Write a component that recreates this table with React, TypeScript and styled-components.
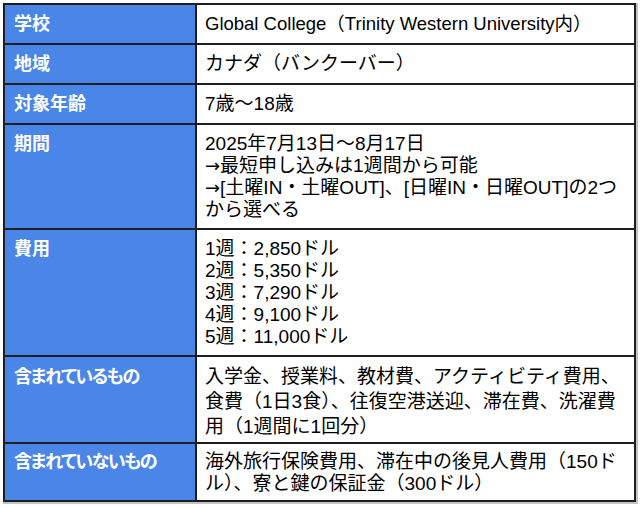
import React from 'react';
import styled, { createGlobalStyle } from 'styled-components';

const GlobalStyle = createGlobalStyle`
  html, body {
    margin: 0;
    padding: 0;
    background: #ffffff;
  }
  body {
    font-family: 'Liberation Sans', 'Noto Sans CJK JP', sans-serif;
  }
`;

const Page = styled.div`
  padding: 3px 0 0 3px;
  width: 640px;
  height: 508px;
  box-sizing: border-box;
`;

const Table = styled.table`
  border-collapse: collapse;
  width: 633px;
  table-layout: fixed;
  box-shadow: 1px 1px 0 1px #c4c4c4;
`;

const HeadCell = styled.th<{ $tight?: boolean; $pt: number }>`
  width: 172px;
  background: #4a86e8;
  color: #ffffff;
  font-weight: 700;
  font-size: 18px;
  line-height: 22px;
  text-align: left;
  vertical-align: top;
  padding: ${(p) => p.$pt}px 9px 0;
  border: 2px solid #1e1e1e;
  font-feature-settings: 'palt';
  letter-spacing: ${(p) => (p.$tight ? '-1.5px' : '0')};
  white-space: nowrap;
`;

const BodyCell = styled.td<{ $pt: number; $pb: number }>`
  background: #ffffff;
  color: #000000;
  font-size: 19px;
  vertical-align: top;
  padding: ${(p) => p.$pt}px 8px ${(p) => p.$pb}px;
  border: 2px solid #1e1e1e;
  white-space: nowrap;
`;

const Line = styled.div<{ $h: number; $size?: number }>`
  height: ${(p) => p.$h}px;
  line-height: ${(p) => p.$h}px;
  font-size: ${(p) => (p.$size ? `${p.$size}px` : 'inherit')};
`;

// wider arrow than the Liberation one, with metrics that fit the line
const Arrow = styled.span`
  font-family: 'DejaVu Sans', sans-serif;
  font-size: 18px;
`;

type Row = {
  head: string;
  lines: React.ReactNode[];
  lh: number;
  pt: number;
  pb: number;
  tight?: boolean;
  size?: number;
};

const rows: Row[] = [
  {
    head: '学校',
    lh: 22,
    pt: 8,
    pb: 8,
    size: 18.5,
    lines: ['Global College（Trinity Western University内）'],
  },
  { head: '地域', lh: 22, pt: 8, pb: 8, lines: ['カナダ（バンクーバー）'] },
  { head: '対象年齢', lh: 22, pt: 8, pb: 8, lines: ['7歳〜18歳'] },
  {
    head: '期間',
    lh: 22,
    pt: 8,
    pb: 7,
    lines: [
      '2025年7月13日～8月17日',
      <>
        <Arrow>→</Arrow>最短申し込みは1週間から可能
      </>,
      <>
        <Arrow>→</Arrow>[土曜IN・土曜OUT]、[日曜IN・日曜OUT]の2つ
      </>,
      'から選べる',
    ],
  },
  {
    head: '費用',
    lh: 22,
    pt: 8,
    pb: 7,
    lines: [
      '1週：2,850ドル',
      '2週：5,350ドル',
      '3週：7,290ドル',
      '4週：9,100ドル',
      '5週：11,000ドル',
    ],
  },
  {
    head: '含まれているもの',
    tight: true,
    lh: 25,
    pt: 7,
    pb: 3,
    lines: [
      '入学金、授業料、教材費、アクティビティ費用、',
      '食費（1日3食）、往復空港送迎、滞在費、洗濯費',
      '用（1週間に1回分）',
    ],
  },
  {
    head: '含まれていないもの',
    tight: true,
    lh: 22,
    pt: 7,
    pb: 5,
    lines: ['海外旅行保険費用、滞在中の後見人費用（150ド', 'ル）、寮と鍵の保証金（300ドル）'],
  },
];

const App = (): JSX.Element => (
  <>
    <GlobalStyle />
    <Page>
      <Table>
        <tbody>
          {rows.map((r) => (
            <tr key={r.head}>
              <HeadCell $tight={r.tight} $pt={r.pt + Math.round((r.lh - 22) / 2)}>
                {r.head}
              </HeadCell>
              <BodyCell $pt={r.pt} $pb={r.pb}>
                {r.lines.map((l, i) => (
                  <Line key={i} $h={r.lh} $size={r.size}>
                    {l}
                  </Line>
                ))}
              </BodyCell>
            </tr>
          ))}
        </tbody>
      </Table>
    </Page>
  </>
);

export default App;
